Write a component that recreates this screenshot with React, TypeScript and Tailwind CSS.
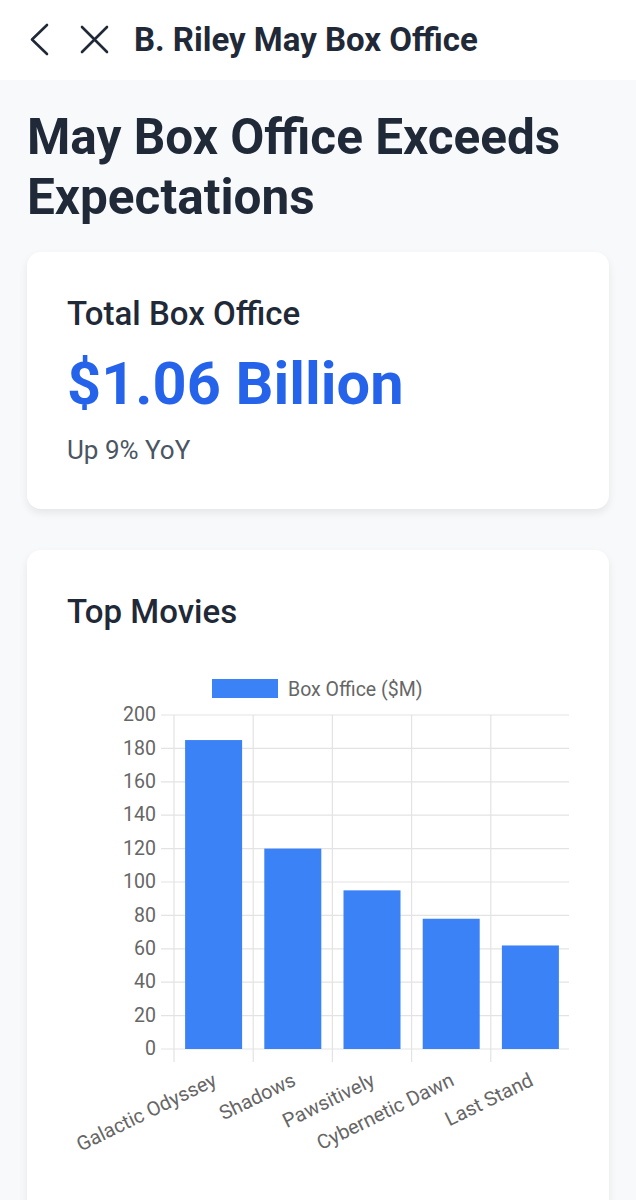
import React from "react";

const movies = [
  { name: "Galactic Odyssey", value: 185 },
  { name: "Shadows", value: 120 },
  { name: "Pawsitively", value: 95 },
  { name: "Cybernetic Dawn", value: 78 },
  { name: "Last Stand", value: 62 },
];

function Chart() {
  // local coords: page x - 67, page y - 655
  const ox = 67;
  const oy = 655;
  const top = 716 - oy;
  const zero = 1050 - oy;
  const step = (zero - top) / 10;
  const left = 174 - ox;
  const right = 570 - ox;
  const cat = (right - left) / 5;
  const ticks = [0, 20, 40, 60, 80, 100, 120, 140, 160, 180, 200];
  const fs = 19.5;
  return (
    <svg width={502} height={520} viewBox="0 0 502 520" style={{ fontFamily: "Roboto, 'Liberation Sans', sans-serif" }}>
      <rect x={212 - ox} y={680 - oy} width={66} height={19} fill="#3b82f6" />
      <text x={288 - ox} y={691.5 - oy} fontSize={fs} fill="#666" dominantBaseline="middle">
        Box Office ($M)
      </text>
      {ticks.map((t, i) => {
        const y = zero - i * step;
        return (
          <g key={t}>
            <line x1={161 - ox} x2={right} y1={y} y2={y} stroke="#e3e3e3" strokeWidth={1.2} />
            <text x={156 - ox} y={y + 1} fontSize={fs} fill="#666" textAnchor="end" dominantBaseline="middle">
              {t}
            </text>
          </g>
        );
      })}
      {[0, 1, 2, 3, 4, 5].map((j) => (
        <line key={j} x1={left + j * cat} x2={left + j * cat} y1={top} y2={1063 - oy} stroke="#e3e3e3" strokeWidth={1.2} />
      ))}
      {movies.map((m, j) => {
        const cx = left + cat * (j + 0.5);
        const h = (m.value / 200) * (zero - top);
        return (
          <g key={m.name}>
            <rect x={cx - 28.5} y={zero - h} width={57} height={h} fill="#3b82f6" />
            <text
              x={cx + 2}
              y={1081 - oy}
              fontSize={20}
              fill="#666"
              textAnchor="end"
              dominantBaseline="middle"
              transform={`rotate(-26 ${cx + 2} ${1081 - oy})`}
            >
              {m.name}
            </text>
          </g>
        );
      })}
    </svg>
  );
}

export default function App() {
  return (
    <div className="min-h-[1200px] bg-[#f8f9fb] font-['Roboto',sans-serif] text-[#1f2937]">
      <header className="flex h-[80px] items-center bg-white pl-[27px]">
        <svg width="24" height="40" viewBox="0 0 24 40" fill="none" stroke="#1f2937" strokeWidth="2.6" strokeLinecap="round" strokeLinejoin="round">
          <path d="M20 5 L5 19.5 L20 34" />
        </svg>
        <svg className="ml-[27px]" width="32" height="32" viewBox="0 0 32 32" fill="none" stroke="#1f2937" strokeWidth="2.6" strokeLinecap="round">
          <path d="M4 3 L29 28 M29 3 L4 28" />
        </svg>
        <div className="ml-[24px] text-[33px] font-bold leading-[40px]">B. Riley May Box Office</div>
      </header>
      <main className="px-[27px] pt-[27px]">
        <h1 className="text-[49.5px] font-bold leading-[60px]">May Box Office Exceeds Expectations</h1>
        <section className="mt-[25px] rounded-[14px] bg-white px-[40px] pb-[43px] pt-[40px] shadow-[0_4px_8px_rgba(0,0,0,0.08)]">
          <h2 className="text-[33px] font-medium leading-[44px]">Total Box Office</h2>
          <div className="mt-[18px] text-[59.5px] font-bold leading-[60px] text-[#2563eb]">$1.06 Billion</div>
          <div className="mt-[20px] text-[26px] leading-[32px] text-[#4b5563]">Up 9% YoY</div>
        </section>
        <section className="mt-[41px] rounded-[14px] bg-white px-[40px] pb-[40px] pt-[40px] shadow-[0_4px_8px_rgba(0,0,0,0.08)]">
          <h2 className="text-[33px] font-medium leading-[44px]">Top Movies</h2>
          <div className="mt-[20px]">
            <Chart />
          </div>
        </section>
      </main>
    </div>
  );
}
